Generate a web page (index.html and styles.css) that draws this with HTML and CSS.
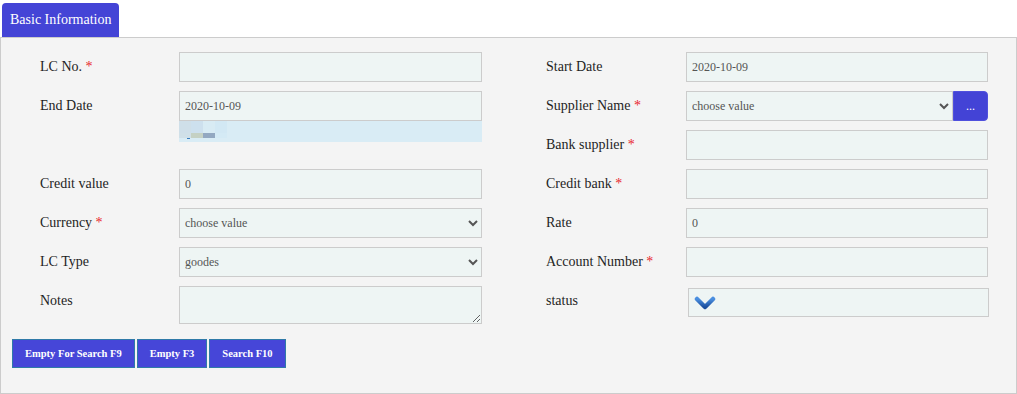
FILE: index.html
```html
<!DOCTYPE html>
<html lang="en">
<head>
  <meta charset="UTF-8">
  <meta name="viewport" content="width=device-width, initial-scale=1">
  <title>LC Search</title>
  <link rel="stylesheet" href="styles.css">
</head>

<body>
  <div class="tabs">
    <span class="tab">Basic Information</span>
  </div>

  <div class="panel">
    <form class="form-grid">
      <div class="field">
        <label for="lc-no">LC No. <span class="req">*</span></label>
        <input type="text" id="lc-no">
      </div>
      <div class="field">
        <label for="start-date">Start Date</label>
        <input type="text" id="start-date" value="2020-10-09">
      </div>

      <div class="field">
        <label for="end-date">End Date</label>
        <div class="date-wrap">
          <input type="text" id="end-date" value="2020-10-09">
          <div class="picker">
            <span class="px a"></span><span class="px b"></span><span class="px c"></span><span class="px d"></span>
            <span class="px e"></span><span class="px f"></span><span class="px g"></span><span class="px h"></span>
            <span class="dot"></span>
          </div>
        </div>
      </div>
      <div class="field">
        <label for="supplier">Supplier Name <span class="req">*</span></label>
        <div class="combo">
          <select id="supplier">
            <option>choose value</option>
          </select>
          <button type="button" class="more">...</button>
        </div>
      </div>

      <div class="field"></div>
      <div class="field">
        <label for="bank-supplier">Bank supplier <span class="req">*</span></label>
        <input type="text" id="bank-supplier">
      </div>

      <div class="field">
        <label for="credit-value">Credit value</label>
        <input type="text" id="credit-value" value="0">
      </div>
      <div class="field">
        <label for="credit-bank">Credit bank <span class="req">*</span></label>
        <input type="text" id="credit-bank">
      </div>

      <div class="field">
        <label for="currency">Currency <span class="req">*</span></label>
        <select id="currency">
          <option>choose value</option>
        </select>
      </div>
      <div class="field">
        <label for="rate">Rate</label>
        <input type="text" id="rate" value="0">
      </div>

      <div class="field">
        <label for="lc-type">LC Type</label>
        <select id="lc-type">
          <option>goodes</option>
        </select>
      </div>
      <div class="field">
        <label for="account">Account Number <span class="req">*</span></label>
        <input type="text" id="account">
      </div>

      <div class="field">
        <label for="notes">Notes</label>
        <textarea id="notes"></textarea>
      </div>
      <div class="field">
        <label>status</label>
        <div class="status">
          <svg width="22" height="16" viewBox="0 0 22 16">
            <defs>
              <linearGradient id="chev" x1="0" y1="0" x2="0" y2="1">
                <stop offset="0" stop-color="#4a8fe0"/>
                <stop offset="1" stop-color="#1b4f9e"/>
              </linearGradient>
            </defs>
            <path d="M3 4 L11 12 L19 4" fill="none" stroke="url(#chev)" stroke-width="4.5" stroke-linecap="round" stroke-linejoin="round"/>
          </svg>
        </div>
      </div>
    </form>

    <div class="actions">
      <button type="button" class="action">Empty For Search F9</button>
      <button type="button" class="action">Empty F3</button>
      <button type="button" class="action">Search F10</button>
    </div>
  </div>
</body>
</html>
```

FILE: styles.css
```css
* {
  box-sizing: border-box;
  margin: 0;
  padding: 0;
  font-family: "Liberation Serif", "Times New Roman", serif;
}

body {
  background: #ffffff;
  width: 1017px;
}

.tabs {
  height: 37px;
  padding: 3px 0 0 2px;
}

.tab {
  display: inline-block;
  height: 34px;
  line-height: 34px;
  padding: 0 8px;
  background: #4444d6;
  color: #fff;
  font-size: 14px;
  border-radius: 4px 4px 0 0;
}

.panel {
  background: #f4f4f4;
  border: 1px solid #ccc;
  padding: 14px 0 25px 0;
}

.form-grid {
  display: grid;
  grid-template-columns: 442px 442px;
  column-gap: 64px;
  row-gap: 9px;
  padding: 0 28px 0 39px;
}

.field {
  display: grid;
  grid-template-columns: 139px 1fr;
  align-items: start;
  min-height: 30px;
}

.field:nth-child(even) {
  grid-template-columns: 140px 1fr;
}

label {
  font-size: 14px;
  line-height: 30px;
  color: #1e1e1e;
}

.req {
  color: #e8242c;
}

input[type="text"],
select,
textarea {
  width: 100%;
  height: 30px;
  padding: 0 5px;
  border: 1px solid #ccc;
  background: #eef5f4;
  color: #555;
  font-size: 12px;
  outline: none;
}

select {
  padding: 0 1px;
}

textarea {
  height: 38px;
  resize: vertical;
}

.date-wrap {
  position: relative;
}

.picker {
  position: absolute;
  top: 100%;
  left: 0;
  right: 0;
  height: 21px;
  background: #d9ecf5;
  display: grid;
  grid-template-columns: repeat(4, 12px);
  grid-template-rows: 12px 5px;
}

.px.a { background: #cfdfe9; }
.px.b { background: #cde0ee; }
.px.c { background: #d8ebf4; }
.px.d { background: #d2e8f4; }
.px.e { background: #d0e0e8; }
.px.f { background: #c5d1c4; }
.px.g { background: #93a8c1; }
.px.h { background: #d4eaf5; }

.dot {
  position: absolute;
  left: 8px;
  top: 17px;
  width: 3px;
  height: 1px;
  background: #3a7fc0;
}

.combo {
  display: flex;
}

.combo select {
  flex: 1;
}

.more {
  width: 35px;
  height: 30px;
  border: 1px solid #5050dd;
  border-radius: 0 4px 4px 0;
  background: #4343d6;
  color: #fff;
  font-size: 12px;
  cursor: pointer;
}

.status {
  height: 29px;
  margin: 2px -1px 0 2px;
  border: 1px solid #ccc;
  background: #eef5f4;
  padding: 6px 0 0 5px;
}

.status svg {
  display: block;
}

.actions {
  display: flex;
  gap: 2px;
  margin: 15px 0 0 11px;
}

.action {
  height: 29px;
  padding: 0 12px;
  background: #4646d8;
  border: 1px solid #2f7aa8;
  color: #fff;
  font-size: 10.5px;
  font-weight: bold;
  cursor: pointer;
}

.action:hover,
.more:hover {
  background: #3535c4;
}
```
